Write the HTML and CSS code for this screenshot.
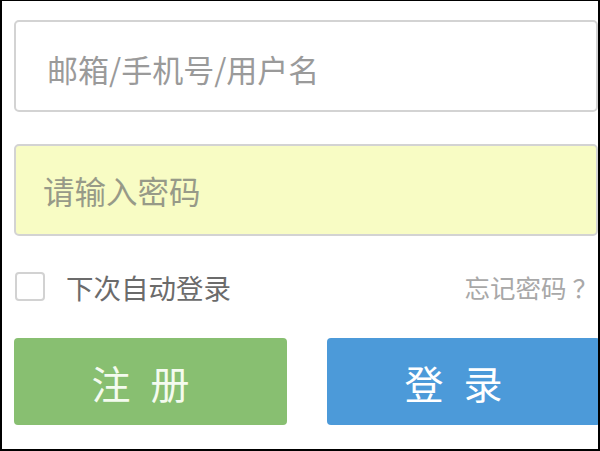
FILE: index.html
```html
<!DOCTYPE html>
<html lang="zh-CN">
<head>
    <meta charset="UTF-8">
    <meta name="viewport" content="width=device-width, initial-scale=1.0">
    <title>登录</title>
    <link rel="stylesheet" href="styles.css">
</head>
<body>
    <div class="frame">
        <form class="login-form">
            <input class="field" type="text" placeholder="邮箱/手机号/用户名">
            <input class="field field-pwd" type="password" placeholder="请输入密码">

            <div class="options">
                <label class="remember">
                    <span class="check"></span>
                    下次自动登录
                </label>
                <a class="forgot" href="#">忘记密码<span class="q">？</span></a>
            </div>

            <div class="buttons">
                <button type="button" class="btn btn-register">注册</button>
                <button type="submit" class="btn btn-login">登录</button>
            </div>
        </form>
    </div>
</body>
</html>
```

FILE: styles.css
```css
body {
    margin: 0;
    padding: 0;
    font-family: "Noto Sans CJK SC", "Noto Sans", sans-serif;
    background: #000;
}
.frame {
    box-sizing: border-box;
    width: 600px;
    height: 451px;
    border: 2px solid #000;
    border-top-width: 1px;
    background: #fff;
    overflow: hidden;
    padding: 19px 0 0 12px;
}
.login-form {
    display: flex;
    flex-direction: column;
    width: 610px;
}
.field {
    box-sizing: border-box;
    width: 584px;
    height: 92px;
    margin: 0;
    padding: 4px 0 0 31px;
    border: 2px solid #d3d3d3;
    border-radius: 5px;
    background: #fff;
    font-family: inherit;
    font-size: 31px;
    color: #555;
    outline: none;
}
.field::placeholder {
    color: #9a9a9a;
}
.field-pwd {
    margin-top: 32px;
    padding: 0 0 0 27px;
    font-size: 31.5px;
    background: #f8fcc4; /* autofill yellow */
}
.field-pwd::placeholder {
    color: #979a88;
}
.options {
    display: flex;
    align-items: center;
    justify-content: space-between;
    width: 584px;
    height: 29px;
    margin-top: 36px;
}
.remember {
    display: flex;
    align-items: center;
    gap: 21px;
    margin-left: 1px;
    font-size: 27.5px;
    color: #6b6b6b;
}
.check {
    box-sizing: border-box;
    width: 30px;
    height: 29px;
    border: 2px solid #d2d2d2;
    border-radius: 4px;
    background: #fff;
}
.forgot {
    display: flex;
    font-size: 25.5px;
    color: #a8a8a8;
    text-decoration: none;
}
.forgot .q {
    padding-left: 6px;
}
.buttons {
    display: flex;
    gap: 40px;
    margin-top: 37px;
}
.btn {
    width: 273px;
    height: 87px;
    padding: 0;
    border: none;
    border-radius: 4px;
    color: #fff;
    font-family: inherit;
    font-size: 39px;
    letter-spacing: 20px;
    cursor: pointer;
}
.btn-register {
    background: #88bf71;
    color: #f4fbef;
}
.btn-login {
    background: #4c9ad9;
}
```
